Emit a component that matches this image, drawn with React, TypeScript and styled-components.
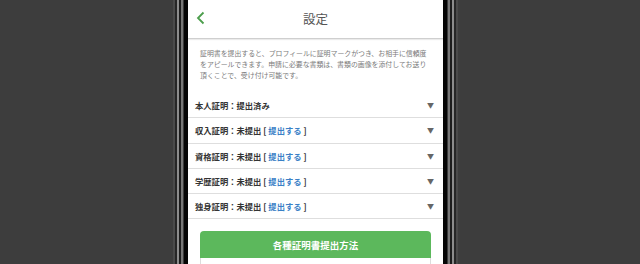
import React from 'react'
import styled, { createGlobalStyle } from "styled-components";

const GlobalStyle = createGlobalStyle`
    html, body {
        margin: 0;
        padding: 0;
        background: #3d3d3d;
    }
    body {
        font-family: "Noto Sans CJK JP", "Noto Sans", sans-serif;
    }
`;

const certs = [
    { name: "本人証明", status: "提出済み", done: true },
    { name: "収入証明", status: "未提出", done: false },
    { name: "資格証明", status: "未提出", done: false },
    { name: "学歴証明", status: "未提出", done: false },
    { name: "独身証明", status: "未提出", done: false },
];

const App = () => {
    return (
    <>
        <GlobalStyle />
        <PageStyled>
            <Phone>
                <Header>
                    <BackButton aria-label="戻る">
                        <svg width="10" height="14" viewBox="0 0 10 14">
                            <polyline points="7.5,1.5 2,7 7.5,12.5" fill="none" stroke="#4c9e4c" strokeWidth="1.8" />
                        </svg>
                    </BackButton>
                    <Title>設定</Title>
                </Header>
                <Description>
                    証明書を提出すると、プロフィールに証明マークがつき、お相手に信頼度<br />
                    をアピールできます。申請に必要な書類は、書類の画像を添付してお送り<br />
                    頂くことで、受け付け可能です。
                </Description>
                <CertList>
                    {certs.map((c) => (
                        <CertRow key={c.name}>
                            <CertLabel>
                                {c.name}：{c.status}
                                {!c.done && (
                                    <> [ <SubmitLink href="#">提出する</SubmitLink> ]</>
                                )}
                            </CertLabel>
                            <Caret>▼</Caret>
                        </CertRow>
                    ))}
                </CertList>
                <GuideBox>
                    <GuideButton>各種証明書提出方法</GuideButton>
                    <GuideBody />
                </GuideBox>
            </Phone>
        </PageStyled>
    </>
    )
}

const PageStyled = styled.main`
    width: 640px;
    height: 264px;
    overflow: hidden;
    padding-left: 188px;
    box-sizing: border-box;
`;

const Phone = styled.section`
    width: 255px;
    min-height: 264px;
    background: #fff;
    box-shadow:
        0 0 0 4px #050505,
        0 0 0 5px #3a3a3a,
        0 0 0 7px #777,
        0 0 0 9px #1c1c1c,
        0 0 0 11px #8c8c8c,
        0 0 0 13px #262626,
        0 0 0 15px #4a4a4a;
`;

const Header = styled.header`
    position: relative;
    height: 38px;
    display: flex;
    align-items: center;
    justify-content: center;
    border-bottom: 1px solid #cfcfcf;
    box-shadow: 0 1px 1px rgba(0, 0, 0, 0.08);
`;

const BackButton = styled.button`
    position: absolute;
    left: 8px;
    top: 11px;
    border: none;
    background: none;
    padding: 0;
    display: flex;
`;

const Title = styled.h1`
    margin: 0 0 2px;
    font-size: 12.5px;
    font-weight: 400;
    color: #555;
`;

const Description = styled.p`
    margin: 9px 0 0;
    padding: 0 12px;
    font-size: 6.9px;
    line-height: 11px;
    color: #7a7a7a;
    white-space: nowrap;
`;

const CertList = styled.ul`
    list-style: none;
    margin: 12px 0 0;
    padding: 0;
`;

const CertRow = styled.li`
    height: 24.3px;
    border-bottom: 1px solid #dedede;
    display: flex;
    align-items: center;
    justify-content: space-between;
    padding: 0 9px 0 7px;
`;

const CertLabel = styled.span`
    font-size: 8.3px;
    font-weight: 700;
    color: #333;
`;

const SubmitLink = styled.a`
    color: #3a80c6;
    text-decoration: none;
`;

const Caret = styled.span`
    font-size: 7px;
    color: #666;
`;

const GuideBox = styled.div`
    margin: 12px 12px 0;
    display: flex;
    flex-direction: column;
`;

const GuideButton = styled.button`
    height: 27px;
    border: none;
    border-radius: 4px 4px 0 0;
    background: #5cb85c;
    color: #fff;
    font-family: "Noto Sans CJK JP", sans-serif;
    font-size: 9.5px;
    font-weight: 700;
`;

const GuideBody = styled.div`
    height: 20px;
    border: 1px solid #dcdcdc;
    border-top: none;
`;

export default App;
